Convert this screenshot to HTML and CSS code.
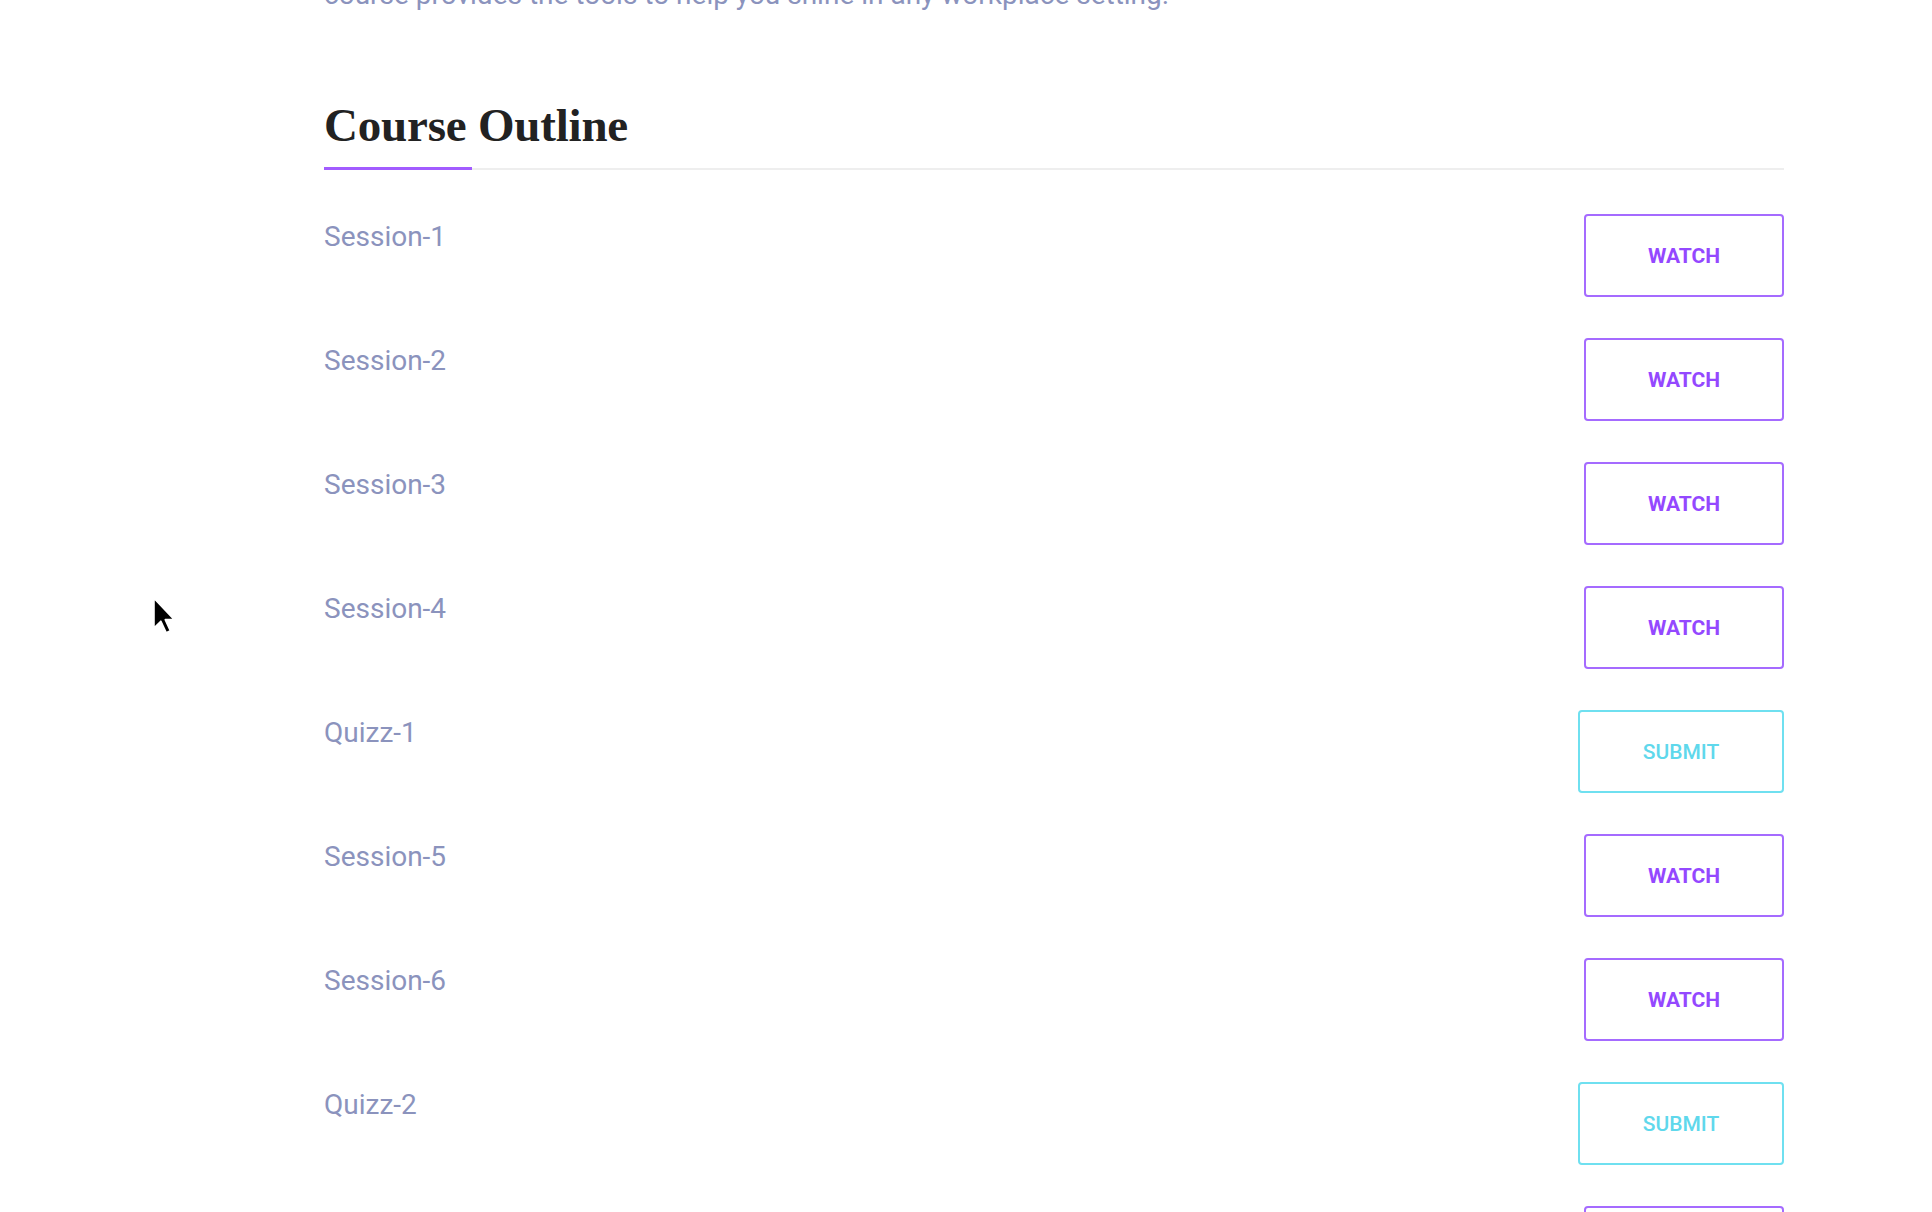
FILE: index.html
```html
<!DOCTYPE html>
<html lang="en">
<head>
<meta charset="utf-8">
<title>Course Outline</title>
<link rel="stylesheet" href="styles.css">
</head>
<body>
<main class="page">
  <p class="intro">course provides the tools to help you shine in any workplace setting.</p>
  <div class="outline-head">
    <h2 class="outline-title">Course Outline</h2>
  </div>
  <ul class="outline">
    <li class="row"><span class="row-label">Session-1</span><button class="btn btn-watch">WATCH</button></li>
    <li class="row"><span class="row-label">Session-2</span><button class="btn btn-watch">WATCH</button></li>
    <li class="row"><span class="row-label">Session-3</span><button class="btn btn-watch">WATCH</button></li>
    <li class="row"><span class="row-label">Session-4</span><button class="btn btn-watch">WATCH</button></li>
    <li class="row"><span class="row-label">Quizz-1</span><button class="btn btn-submit">SUBMIT</button></li>
    <li class="row"><span class="row-label">Session-5</span><button class="btn btn-watch">WATCH</button></li>
    <li class="row"><span class="row-label">Session-6</span><button class="btn btn-watch">WATCH</button></li>
    <li class="row"><span class="row-label">Quizz-2</span><button class="btn btn-submit">SUBMIT</button></li>
    <li class="row"><span class="row-label">Session-7</span><button class="btn btn-watch">WATCH</button></li>
    <li class="row"><span class="row-label">Session-8</span><button class="btn btn-watch">WATCH</button></li>
  </ul>
</main>
<svg class="cursor" width="25" height="39" viewBox="0 0 13 20" aria-hidden="true">
  <path d="M1,1 L1,16.5 L4.6,13 L7.4,19 L9.6,18 L6.9,12.2 L11.6,12.2 Z" fill="#000" stroke="#fff" stroke-width="0.9" stroke-linejoin="round"/>
</svg>
</body>
</html>
```
FILE: styles.css
```css
html, body {
  margin: 0;
  padding: 0;
  background: #fff;
  overflow: hidden;
}
body {
  font-family: Roboto, "Liberation Sans", sans-serif;
  color: #8b93bd;
}
.page {
  width: 1460px;
  margin-left: 324px;
}
.intro {
  margin: -26px 0 0;
  font-size: 28px;
  line-height: 42px;
  color: #8b93bd;
}
.outline-head {
  position: relative;
  margin-top: 82px;
  padding-bottom: 15px;
  border-bottom: 2px solid #eeeeee;
}
.outline-head::after {
  content: "";
  position: absolute;
  left: 0;
  bottom: -2px;
  width: 148px;
  height: 3px;
  background: #a25cff;
}
.outline-title {
  margin: 0;
  font-family: "Liberation Serif", "DejaVu Serif", serif;
  font-weight: 700;
  font-size: 47px;
  line-height: 55px;
  color: #222222;
  letter-spacing: -0.2px;
}
.outline {
  list-style: none;
  margin: 44px 0 0;
  padding: 0;
}
.row {
  display: flex;
  justify-content: space-between;
  align-items: flex-start;
  margin-bottom: 41px;
}
.row-label {
  padding-top: 2px;
  font-size: 28px;
  line-height: 42px;
  color: #8b93bd;
}
.btn {
  height: 83px;
  background: #fff;
  border: 2px solid;
  border-radius: 4px;
  font-family: Roboto, "Liberation Sans", sans-serif;
  font-size: 21px;
  cursor: pointer;
  padding: 0;
}
.btn-watch {
  width: 200px;
  border-color: #a56bff;
  color: #9448ff;
  font-weight: 700;
}
.btn-submit {
  width: 206px;
  border-color: #6fe0f0;
  color: #5fd8ec;
  font-weight: 500;
}
.cursor {
  position: absolute;
  left: 152px;
  top: 596px;
}
```
